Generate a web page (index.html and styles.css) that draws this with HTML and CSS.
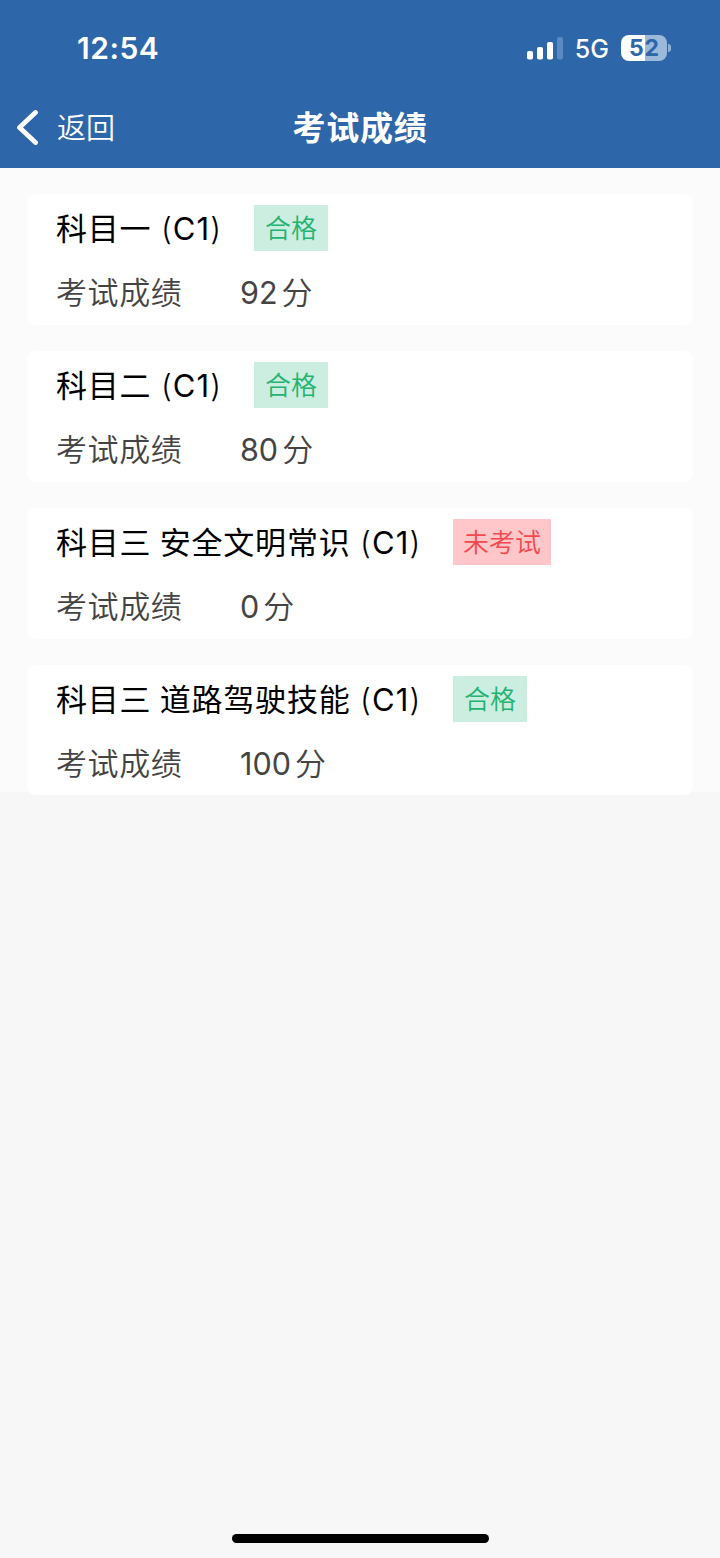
FILE: index.html
```html
<!DOCTYPE html>
<html lang="zh-CN">
<head>
<meta charset="utf-8">
<title>考试成绩</title>
<link rel="stylesheet" href="styles.css">
</head>
<body>
<header class="header">
  <div class="status">
    <span class="time">12:54</span>
    <svg class="signal" width="36" height="24" viewBox="0 0 36 24">
      <rect x="0" y="15" width="6" height="8.5" rx="1.8" fill="#fff"/>
      <rect x="10" y="11" width="6" height="12.5" rx="1.8" fill="#fff"/>
      <rect x="20" y="6" width="6" height="17.5" rx="1.8" fill="#fff"/>
      <rect x="30" y="1" width="6" height="22.5" rx="1.8" fill="#5a8ac2"/>
    </svg>
    <span class="network">5G</span>
    <div class="battery"><div class="level"><span>5</span><span>2</span></div><i class="cap"></i></div>
  </div>
  <nav class="nav">
    <a class="back">
      <svg width="22" height="36" viewBox="0 0 22 36"><path d="M18.5 2.5 2.5 17.5 18.5 32.5" fill="none" stroke="#fff" stroke-width="4.8" stroke-linecap="round" stroke-linejoin="round"/></svg>
      <span>返回</span>
    </a>
    <h1 class="title">考试成绩</h1>
  </nav>
</header>
<main class="results">
  <section class="card">
    <div class="subject"><h2>科目一<span class="type"><i>(</i>C1<i>)</i></span></h2><span class="badge pass">合格</span></div>
    <div class="score"><span class="label">考试成绩</span><span class="num">92</span><span>分</span></div>
  </section>
  <section class="card">
    <div class="subject"><h2>科目二<span class="type"><i>(</i>C1<i>)</i></span></h2><span class="badge pass">合格</span></div>
    <div class="score"><span class="label">考试成绩</span><span class="num">80</span><span>分</span></div>
  </section>
  <section class="card">
    <div class="subject"><h2>科目三 安全文明常识<span class="type"><i>(</i>C1<i>)</i></span></h2><span class="badge pending">未考试</span></div>
    <div class="score"><span class="label">考试成绩</span><span class="num">0</span><span>分</span></div>
  </section>
  <section class="card">
    <div class="subject"><h2>科目三 道路驾驶技能<span class="type"><i>(</i>C1<i>)</i></span></h2><span class="badge pass">合格</span></div>
    <div class="score"><span class="label">考试成绩</span><span class="num">100</span><span>分</span></div>
  </section>
</main>
<footer class="home"><div class="home-bar"></div></footer>
</body>
</html>
```
FILE: styles.css
```css
* { box-sizing: border-box; }
body {
  margin: 0;
  height: 1558px;
  display: flex;
  flex-direction: column;
  background: #f7f7f7;
  font-family: Inter, "Noto Sans CJK SC", sans-serif;
}
.header { height: 168px; background: #2d66a9; color: #fff; flex: none; }
.status { height: 88px; display: flex; align-items: center; padding: 8px 49px 0 77px; }
.time { font-size: 30px; font-weight: 600; letter-spacing: 0.5px; line-height: 36px; }
.signal { margin-left: auto; }
.network { margin: 2px 12px 0 12px; font-size: 25px; font-weight: 450; line-height: 30px; }
.battery { display: flex; align-items: center; gap: 1px; }
.level {
  width: 46px;
  height: 26px;
  border-radius: 8px;
  background: linear-gradient(90deg, #fff 24px, #9bb9db 24px);
  color: #2d66a9;
  display: flex;
  justify-content: center;
  gap: 1px;
  font-size: 23px;
  font-weight: 650;
  line-height: 26px;
}
.cap { width: 3px; height: 8px; border-radius: 0 3px 3px 0; background: #8db2dc; }
.nav { height: 80px; display: grid; grid-template-columns: 1fr auto 1fr; align-items: center; }
.back { display: flex; align-items: center; gap: 18px; padding-left: 17px; font-size: 29px; line-height: 40px; font-weight: 350; }
.back span { padding-top: 2px; }
.title { margin: 0; font-size: 33px; font-weight: 600; letter-spacing: 0.8px; line-height: 44px; }
.results {
  height: 624px;
  padding: 26px 27px 0;
  display: flex;
  flex-direction: column;
  gap: 26px;
  background: #fbfbfb;
}
.card { height: 131px; flex: none; padding: 11px 29px 0; border-radius: 9px; background: #fff; }
.card:last-child { height: 130px; }
.subject { display: flex; align-items: center; height: 46px; }
.subject h2 { margin: 0; padding-top: 1px; font-size: 31px; font-weight: 400; letter-spacing: 0.8px; word-spacing: -1.2px; color: #000; line-height: 44px; white-space: nowrap; }
.type { display: inline-block; width: 61px; margin-left: 9.5px; letter-spacing: 1.1px; }
.type i { font-style: normal; font-weight: 300; }
.badge { height: 46px; margin-left: 32px; padding: 1px 11px 0; font-size: 26px; line-height: 46px; font-weight: 350; }
.pass { background: #cceee0; color: #23b371; }
.pending { padding: 1px 10px 0; background: #ffc7c9; color: #f5484f; }
.score { display: flex; align-items: center; height: 44px; margin-top: 20px; font-size: 31px; font-weight: 350; color: #444; line-height: 44px; }
.label { width: 184px; letter-spacing: 0.6px; }
.num { margin-right: 4px; font-size: 30.5px; font-weight: 400; }
.home { margin-top: auto; height: 24px; display: flex; justify-content: center; }
.home-bar { width: 257px; height: 9px; border-radius: 5px; background: #000; }
```
